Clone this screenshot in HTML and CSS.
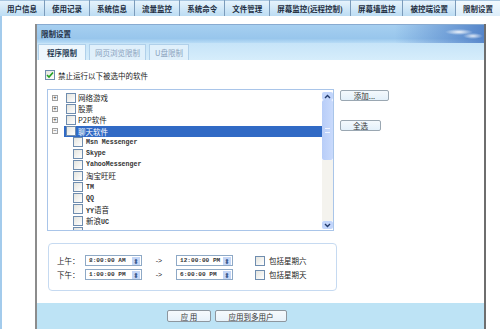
FILE: index.html
```html
<!DOCTYPE html>
<html lang="zh-CN">
<head>
    <meta charset="UTF-8">
    <title>限制设置</title>
    <link rel="stylesheet" href="styles.css">
</head>
<body>

    <div class="topnav">
        <div class="tab">用户信息</div>
        <div class="tab">使用记录</div>
        <div class="tab">系统信息</div>
        <div class="tab">流量监控</div>
        <div class="tab">系统命令</div>
        <div class="tab">文件管理</div>
        <div class="tab">屏幕监控(远程控制)</div>
        <div class="tab">屏幕墙监控</div>
        <div class="tab">被控端设置</div>
        <div class="tab active">限制设置</div>
    </div>

    <div class="page">
        <div class="panel">
            <div class="panel-head">限制设置</div>

            <div class="subtabs">
                <div class="subtab active">程序限制</div>
                <div class="subtab">网页浏览限制</div>
                <div class="subtab">U盘限制</div>
            </div>

            <div class="content">
                <div class="check-row">
                    <span class="cb checked">
                        <svg width="8" height="8" viewBox="0 0 8 8"><path d="M1 4 L3 6 L7 1.5" fill="none" stroke="#21a121" stroke-width="1.6"/></svg>
                    </span>
                    <span>禁止运行以下被选中的软件</span>
                </div>

                <div class="list-area">
                    <div class="listbox">
                        <div class="tree">
                            <div class="row"><span class="exp">+</span><span class="item"><span class="cb"></span><span>网络游戏</span></span></div>
                            <div class="row"><span class="exp">+</span><span class="item"><span class="cb"></span><span>股票</span></span></div>
                            <div class="row"><span class="exp">+</span><span class="item"><span class="cb"></span><span>P2P软件</span></span></div>
                            <div class="row"><span class="exp">−</span><span class="item selected"><span class="cb"></span><span>聊天软件</span></span></div>
                            <div class="row child"><span class="cb"></span><span class="en">Msn Messenger</span></div>
                            <div class="row child"><span class="cb"></span><span class="en">Skype</span></div>
                            <div class="row child"><span class="cb"></span><span class="en">YahooMessenger</span></div>
                            <div class="row child"><span class="cb"></span><span>淘宝旺旺</span></div>
                            <div class="row child"><span class="cb"></span><span class="en">TM</span></div>
                            <div class="row child"><span class="cb"></span><span class="en">QQ</span></div>
                            <div class="row child"><span class="cb"></span><span><span class="en">YY</span>语音</span></div>
                            <div class="row child"><span class="cb"></span><span>新浪<span class="en">UC</span></span></div>
                            <div class="row child"><span class="cb"></span></div>
                        </div>
                        <div class="scrollbar">
                            <div class="sb-btn">
                                <svg width="7" height="5" viewBox="0 0 7 5"><path d="M1 4 L3.5 1.5 L6 4" fill="none" stroke="#243c6c" stroke-width="1.4"/></svg>
                            </div>
                            <div class="sb-thumb"><span class="grip"></span></div>
                            <div class="sb-track"></div>
                            <div class="sb-btn">
                                <svg width="7" height="5" viewBox="0 0 7 5"><path d="M1 1 L3.5 3.5 L6 1" fill="none" stroke="#243c6c" stroke-width="1.4"/></svg>
                            </div>
                        </div>
                    </div>
                    <div class="side-buttons">
                        <button class="btn btn-add">添加...</button>
                        <button class="btn btn-all">全选</button>
                    </div>
                </div>

                <div class="timebox">
                    <div class="time-row">
                        <span class="tlabel">上午：</span>
                        <span class="spin"><span class="val">8:00:00 AM</span><span class="spin-btn">⬍</span></span>
                        <span class="arrow">-&gt;</span>
                        <span class="spin"><span class="val">12:00:00 PM</span><span class="spin-btn">⬍</span></span>
                        <span class="day"><span class="cb"></span><span>包括星期六</span></span>
                    </div>
                    <div class="time-row">
                        <span class="tlabel">下午：</span>
                        <span class="spin"><span class="val">1:00:00 PM</span><span class="spin-btn">⬍</span></span>
                        <span class="arrow">-&gt;</span>
                        <span class="spin"><span class="val">6:00:00 PM</span><span class="spin-btn">⬍</span></span>
                        <span class="day"><span class="cb"></span><span>包括星期天</span></span>
                    </div>
                </div>
            </div>

            <div class="footer">
                <button class="btn btn-apply">应 用</button>
                <button class="btn btn-multi">应用到多用户</button>
            </div>
        </div>
    </div>

</body>
</html>
```

FILE: styles.css
```css
* {
    box-sizing: border-box;
}
body {
    margin: 0;
    width: 500px;
    height: 329px;
    overflow: hidden;
    background: #ffffff;
    font-family: "Noto Sans CJK SC", "Noto Sans", sans-serif;
    font-size: 7.5px;
    color: #222;
}

/* top tab bar */
.topnav {
    display: flex;
    height: 16px;
    background: #7b9bbb;
}
.tab {
    flex: 1 1 auto;
    padding: 0 2px;
    margin-right: 1px;
    height: 16px;
    line-height: 15px;
    text-align: center;
    white-space: nowrap;
    font-weight: bold;
    color: #1d2d40;
    background: linear-gradient(#e6f3fc, #bcdcf3);
    border-top: 1px solid #a8c6e0;
}
.tab:last-child {
    margin-right: 0;
}
.tab.active {
    background: linear-gradient(#f2f9fe, #dcedf9);
}

/* page and panel */
.page {
    height: 313px;
    padding: 8px 0 0 35px;
    border-left: 2px solid #a3cbec;
}
.panel {
    width: 451px;
    margin-left: -2px;
    border-left: 2px solid #8c8c8c;
    border-right: 2px solid #6e6e6e;
}
.panel-head {
    height: 19px;
    padding-left: 4px;
    line-height: 18px;
    font-weight: bold;
    color: #1f2f44;
    border-top: 1px solid #88aad0;
    background:
        radial-gradient(ellipse 14px 3px at 422px 7px, rgba(255,255,255,0.9), rgba(255,255,255,0)),
        radial-gradient(ellipse 10px 3px at 436px 11px, rgba(255,255,255,0.8), rgba(255,255,255,0)),
        linear-gradient(to right, rgba(60,110,190,0) 80%, rgba(60,110,190,0.75) 100%),
        linear-gradient(#a6cff0, #98c6ec 75%, #b8dcf6);
}
.subtabs {
    display: flex;
    gap: 3px;
    height: 17px;
    padding: 1px 0 0 1px;
    background: linear-gradient(#c6e4f8, #d6edfb);
}
.subtab {
    padding: 0 5px;
    line-height: 15px;
    color: #8aa2bc;
    background: #e0f0fb;
    border: 1px solid #b0d0ea;
    border-bottom: none;
}
.subtab.active {
    padding: 0 8px;
    font-weight: bold;
    color: #243850;
    background: #eef7fd;
}

/* content */
.content {
    height: 243px;
    padding: 10px 0 0 8px;
}
.check-row {
    display: flex;
    align-items: center;
    gap: 3px;
    height: 10px;
}
.cb {
    display: inline-flex;
    align-items: center;
    justify-content: center;
    flex: none;
    width: 10px;
    height: 10px;
    border: 1px solid #6f8daf;
    background: linear-gradient(135deg, #e4e4de, #ffffff);
}

.list-area {
    display: flex;
    margin: 9px 0 0 2px;
}
.listbox {
    display: flex;
    width: 287px;
    height: 142px;
    border: 1px solid #a9c5e9;
    overflow: hidden;
}
.tree {
    width: 274px;
    padding-top: 2px;
}
.row {
    display: flex;
    align-items: center;
    height: 11.2px;
    white-space: nowrap;
}
.exp {
    width: 6px;
    height: 6px;
    margin: 0 6px 0 4px;
    border: 1px solid #a0a0a0;
    font-size: 6px;
    line-height: 4px;
    text-align: center;
    color: #333;
    background: #f6f6f6;
}
.item {
    display: flex;
    align-items: center;
    gap: 2px;
    flex: 1;
    height: 11px;
    padding-left: 2px;
}
.item.selected {
    color: #ffffff;
    background: #316ac5;
}
.row.child {
    gap: 3px;
    padding-left: 25px;
}
.en {
    font-family: "Liberation Mono", monospace;
    font-size: 6.6px;
    font-weight: bold;
    color: #333;
}

.scrollbar {
    display: flex;
    flex-direction: column;
    width: 11px;
    padding: 2px 0 1px;
}
.sb-btn {
    display: flex;
    align-items: center;
    justify-content: center;
    height: 8px;
    border-radius: 2px;
    background: #c2d5fb;
}
.sb-thumb {
    display: flex;
    align-items: center;
    justify-content: center;
    height: 60px;
    border-radius: 2px;
    background: linear-gradient(to right, #b8cdf8, #c9dafc);
}
.grip {
    width: 5px;
    height: 5px;
    border-top: 1px solid #eef3ff;
    border-bottom: 1px solid #eef3ff;
}
.sb-track {
    flex: 1;
    background: #f4f3ee;
}

.side-buttons {
    display: flex;
    flex-direction: column;
    align-items: flex-start;
    gap: 19px;
    margin: 1px 0 0 6px;
}
.btn {
    height: 11px;
    padding: 0;
    font-family: "Noto Sans CJK SC", "Noto Sans", sans-serif;
    font-size: 7.5px;
    line-height: 9px;
    color: #333;
    background: linear-gradient(#f4f9fd, #e3f0fa);
    border: 1px solid #9aa7b2;
    border-radius: 2px;
}
.btn-add {
    width: 49px;
}
.btn-all {
    width: 41px;
}

/* time range */
.timebox {
    width: 289px;
    height: 48px;
    margin: 12px 0 0 3px;
    padding: 11px 0 0 8px;
    border: 1px solid #c6daf1;
    border-radius: 4px;
}
.time-row {
    display: flex;
    align-items: center;
    height: 11px;
    margin-bottom: 3px;
}
.tlabel {
    width: 28px;
}
.spin {
    display: flex;
    align-items: center;
    justify-content: space-between;
    width: 57px;
    height: 11px;
    padding: 0 1px 0 3px;
    border: 1px solid #8ea9c6;
    background: #ffffff;
    white-space: nowrap;
}
.val {
    font-family: "Liberation Mono", monospace;
    font-size: 6.1px;
    font-weight: bold;
    color: #333;
}
.spin-btn {
    flex: none;
    width: 8px;
    height: 8px;
    font-size: 7px;
    line-height: 8px;
    text-align: center;
    color: #3a5a8c;
    background: #c4d6f6;
}
.arrow {
    width: 34px;
    text-align: center;
    font-family: "Liberation Sans", sans-serif;
    font-size: 7px;
}
.day {
    display: flex;
    align-items: center;
    gap: 4px;
    margin-left: 22px;
}

/* footer */
.footer {
    display: flex;
    gap: 4px;
    height: 26px;
    padding: 7px 0 0 130px;
    background: #bde3f5;
}
.footer .btn {
    height: 12px;
    background: linear-gradient(#f6fafd, #e8f2fa);
    border-color: #8d969e;
}
.btn-apply {
    width: 44px;
}
.btn-multi {
    width: 72px;
}
```
